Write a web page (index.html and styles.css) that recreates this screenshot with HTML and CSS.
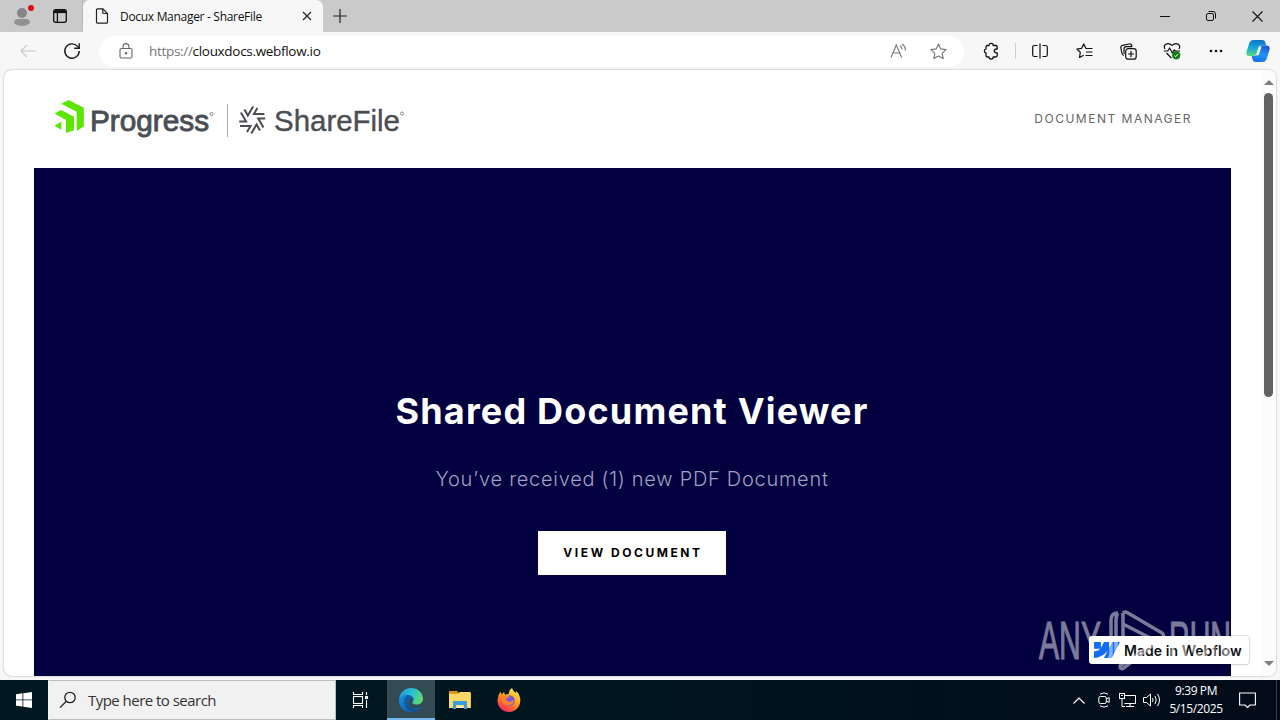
FILE: index.html
```html
<!DOCTYPE html>
<html lang="en">
<head>
  <meta charset="UTF-8" />
  <meta name="viewport" content="width=device-width, initial-scale=1.0" />
  <title>Docux Manager - ShareFile</title>
  <link rel="stylesheet" href="styles.css">
</head>
<body>
  <div class="tab-strip">
    <span class="profile">
      <svg width="20" height="20" viewBox="0 0 20 20"><circle cx="10" cy="6" r="5" fill="#858585"/><path d="M2 16q0-4 4-4h8q4 0 4 4-3 3-8 3t-8-3z" fill="#929292"/></svg>
      <i class="alert-dot"></i>
    </span>
    <span class="workspaces">
      <svg width="16" height="16" viewBox="0 0 16 16" fill="none" stroke="#111" stroke-width="1.3"><rect x="1.7" y="1.7" width="12.6" height="12.6" rx="2"/><path d="M2 3.6h12" stroke-width="3"/><path d="M5.4 4v10"/></svg>
    </span>
    <div class="tab">
      <svg width="14" height="16" viewBox="0 0 14 16" fill="none" stroke="#222" stroke-width="1.2"><path d="M2.5.8h5.3l4.7 4.7v8.7q0 1-1 1h-9q-1 0-1-1V1.8q0-1 1-1z"/><path d="M7.8.8v3.7q0 1 1 1h3.7"/></svg>
      <span class="tab-title">Docux Manager - ShareFile</span>
      <svg class="tab-close" width="10" height="10" viewBox="0 0 10 10" stroke="#222" stroke-width="1.2"><path d="M1 1l8 8M9 1L1 9"/></svg>
    </div>
    <span class="new-tab"><svg width="14" height="14" viewBox="0 0 14 14" stroke="#222" stroke-width="1.2"><path d="M7 0v14M0 7h14"/></svg></span>
    <div class="window-buttons">
      <span><svg width="10" height="10" viewBox="0 0 10 10" stroke="#111"><path d="M0 5.5h10"/></svg></span>
      <span><svg width="10" height="10" viewBox="0 0 10 10" fill="none" stroke="#111"><rect x=".5" y="2.5" width="7" height="7" rx="1.5"/><path d="M2.5.5H7Q9.5.5 9.5 3v4.500"/></svg></span>
      <span><svg width="11" height="11" viewBox="0 0 11 11" stroke="#111" stroke-width="1.1"><path d="M.5.5l10 10M10.5.5l-10 10"/></svg></span>
    </div>
  </div>

  <div class="toolbar">
    <span class="tool back"><svg width="16" height="14" viewBox="0 0 16 14" fill="none" stroke="#c8c8c8" stroke-width="1.2"><path d="M15.5 7H1M7 .8L.9 7 7 13.2"/></svg></span>
    <span class="tool"><svg width="18" height="18" viewBox="0 0 18 18" fill="none" stroke="#1b1b1b" stroke-width="1.4"><path d="M16.200 9A7.200 7.200 0 1 1 14.500 4.400l1.700 1.700"/><path d="M16.200 1.200v5h-5"/></svg></span>
    <div class="address">
      <svg class="lock" width="14" height="16" viewBox="0 0 14 16" fill="none" stroke="#666" stroke-width="1.1"><rect x="1" y="5.5" width="12" height="9.5" rx="1.5"/><path d="M4 5.500V3.600a3 3 0 0 1 6 0v1.900"/><circle cx="7" cy="10.2" r=".7" fill="#666"/></svg>
      <span class="url"><span class="scheme">https://</span>clouxdocs.webflow.io</span>
      <svg class="read-aloud" width="17" height="16" viewBox="0 0 17 16" fill="none" stroke="#777" stroke-width="1.1"><path d="M1 14.500L6.300 2l5.300 12.500M3 10h6.600M10 2.800q2 1.300 2 3.700M12 1q3.600 2.200 3.400 6.500"/></svg>
      <svg class="star" width="17" height="17" viewBox="0 0 17 17" fill="none" stroke="#777" stroke-width="1.1" stroke-linejoin="round"><path d="M8.500 1l2.300 4.900 5.300.7-3.900 3.700 1 5.300-4.700-2.600-4.700 2.600 1-5.300L.9 6.600l5.300-.7z"/></svg>
    </div>
    <div class="tools">
      <span class="tool"><svg width="16" height="18" viewBox="0 0 16 18" fill="none" stroke="#111" stroke-width="1.3" stroke-linejoin="round"><path d="M4.500 3.500H6a2.100 2.100 0 0 1 4.200 0h2.500q1.500 0 1.500 1.500v2h-.9a1.900 1.900 0 0 0 0 3.900h.9v2.600q0 1.500-1.500 1.500h-2.500a2.100 2.100 0 0 1-4.200 0H4.500Q3 15 3 13.500V11a2.100 2.100 0 0 1 0-4.100V5q0-1.500 1.500-1.500z"/></svg></span>
      <i class="divider"></i>
      <span class="tool"><svg width="16" height="16" viewBox="0 0 16 16" fill="none" stroke="#111" stroke-width="1.2"><path d="M8 .5v15M5.500 2.500h-3q-1.800 0-1.800 1.800v7.400q0 1.800 1.800 1.800h3M10.500 2.500h3q1.800 0 1.800 1.800v7.400q0 1.800-1.800 1.800h-3"/></svg></span>
      <span class="tool"><svg width="17" height="16" viewBox="0 0 17 16" fill="none" stroke="#111" stroke-width="1.2" stroke-linejoin="round"><path d="M10.800 5.500l-1-.2L7.700 1 5.600 5.300l-4.700.7 3.400 3.300-.8 5.200 4.200-2.300M10.800 5.500H16.500M10 9h6.500M9.500 12.500h7"/></svg></span>
      <span class="tool"><svg width="17" height="17" viewBox="0 0 17 17" fill="none" stroke="#111" stroke-width="1.2"><rect x="5.7" y="5.7" width="10.500" height="10.500" rx="2.500"/><path d="M11 8v6M8 11h6M4 12.500Q2.300 12 2 10.500L.8 4.700Q.6 2.800 2.400 2.300L9.300 1q1.900-.3 2.500 1.500l.3.900M4 11V6.200q0-2.400 2.300-2.500h6"/></svg></span>
      <span class="tool"><svg width="18" height="18" viewBox="0 0 18 18" fill="none" stroke="#111" stroke-width="1.2" stroke-linejoin="round"><path d="M2 7Q.3 4 2.700 2.200 5.700.4 9 3.400q3.300-3 6.300-1.200Q17.700 4 16 7M.8 9h4l1.800-3 2.700 5 2-3.200 1 1.200H17M3.400 11l5 5"/><circle cx="13.2" cy="13.300" r="4.100" fill="#107c10" stroke="none"/><path d="M11.400 13.400l1.300 1.300 2.500-2.700" stroke="#fff" stroke-width="1"/></svg></span>
      <span class="tool"><svg width="14" height="4" viewBox="0 0 14 4" fill="#111"><circle cx="2" cy="2" r="1.300"/><circle cx="7" cy="2" r="1.300"/><circle cx="12" cy="2" r="1.300"/></svg></span>
      <span class="copilot"><svg width="24" height="22" viewBox="0 0 24 22">
        <defs>
          <linearGradient id="cpA" x1="0.4" y1="0" x2="0.3" y2="1"><stop offset="0" stop-color="#0b74c9"/><stop offset=".5" stop-color="#18a8d8"/><stop offset="1" stop-color="#55d984"/></linearGradient>
          <linearGradient id="cpB" x1="0.7" y1="0" x2="0.3" y2="1"><stop offset="0" stop-color="#1b58d8"/><stop offset=".5" stop-color="#2493f3"/><stop offset="1" stop-color="#1270f0"/></linearGradient>
        </defs>
        <path d="M7.500 0h9q2 0 2.700 2l1 3.500h-5.300q-2 0-2.600 2l-2 6.500q-.6 2-2.600 2H3.500Q-.3 16 .5 11.800L3.400 3Q4.500 0 7.500 0z" fill="url(#cpA)"/>
        <path d="M16.500 22h-7q-2 0-2.700-2l-1.100-4h3q2 0 2.600-2l2-6.500q.6-2 2.600-2h4.600q3.800 0 3 4.200L20.600 19q-1.100 3-4.100 3z" fill="url(#cpB)"/>
        <path d="M13.500 6.500h2l-2.800 8.700h-2.200z" fill="#f7f7f7"/>
      </svg></span>
    </div>
  </div>

  <div class="viewport">
    <main class="page">
      <header class="site-header">
        <svg class="logo" width="354" height="44" viewBox="0 0 354 44">
          <g fill="#5ce500">
            <path d="M7.200 6.700L14.500 3l15.300 7.800v18.800L22.700 34V14.700z"/>
            <path d="M.5 16.500L7 12.900l13 6.800v13.600l-8 2.800V23z"/>
            <path d="M.5 28.500l6.800-3.800v8z"/>
          </g>
          <text class="logo-text progress-text" x="36" y="34" textLength="119" lengthAdjust="spacingAndGlyphs">Progress</text>
          <circle cx="157.5" cy="17" r="1.500" fill="none" stroke="#888"/>
          <path d="M173.500 7v33" stroke="#aaa"/>
          <g transform="translate(198.2 23)" fill="none" stroke="#4b4f54" stroke-width="2">
            <path d="M5.200-12L1.700-6h10.500"/>
            <path d="M5.200-12L1.700-6h10.500" transform="rotate(60)"/>
            <path d="M5.200-12L1.700-6h10.500" transform="rotate(120)"/>
            <path d="M5.200-12L1.700-6h10.500" transform="rotate(180)"/>
            <path d="M5.200-12L1.700-6h10.500" transform="rotate(240)"/>
            <path d="M5.200-12L1.700-6h10.500" transform="rotate(300)"/>
          </g>
          <text class="logo-text share-text" x="220" y="34" textLength="126" lengthAdjust="spacingAndGlyphs">ShareFile</text>
          <circle cx="348" cy="16.5" r="1.500" fill="none" stroke="#888"/>
        </svg>
        <a class="nav-link">DOCUMENT MANAGER</a>
      </header>
      <section class="hero">
        <h1>Shared Document Viewer</h1>
        <p>You’ve received (1) new PDF Document</p>
        <a class="button">VIEW DOCUMENT</a>
      </section>
    </main>
    <div class="scrollbar">
      <i class="arrow up"></i>
      <i class="thumb"></i>
      <i class="arrow down"></i>
    </div>
  </div>

  <div class="webflow-badge">
    <svg width="26" height="16" viewBox="0 0 26 16"><path d="M26 0l-8.300 16H9.900l3.500-6.700h-.2C10.300 13 6.100 15.500 0 16V9.400s3.900-.2 6.200-2.600H0V0h6.900v5.600h.2L10 0h5.200v5.600h.2L18.300 0z" fill="#146ef5"/></svg>
    <span>Made in Webflow</span>
  </div>

  <svg class="watermark" width="204" height="66" viewBox="0 0 204 66">
    <text x="2" y="51" textLength="62" lengthAdjust="spacingAndGlyphs">ANY</text>
    <text x="132" y="51" textLength="62" lengthAdjust="spacingAndGlyphs">RUN</text>
    <path d="M81 5q-7 0-7 7v33q0 5-3 7M81 5q-2 2-2 7v37q0 4-3 4M86 5v11l35 18M86 5q2-2 5 0l34 20q3 2 0 5L87 60q-4 2-4-2l6-4 30-20M86 16v34" fill="none" stroke="#fff" stroke-width="3.500" stroke-linejoin="round"/>
  </svg>

  <footer class="taskbar">
    <span class="start"><svg width="16" height="16" viewBox="0 0 16 16" fill="#fff"><path d="M0 2.200l6.500-.9v6.200H0zM7.300 1.200L16 0v7.500H7.300zM0 8.300h6.500v6.200L0 13.700zM7.300 8.300H16V16l-8.700-1.300z"/></svg></span>
    <div class="search">
      <svg width="18" height="18" viewBox="0 0 18 18" fill="none" stroke="#222" stroke-width="1.3"><circle cx="11" cy="6.500" r="5.200"/><path d="M7.300 10.300L1 16.600"/></svg>
      <span>Type here to search</span>
    </div>
    <span class="task task-view"><svg width="18" height="18" viewBox="0 0 18 18" fill="none" stroke="#fff" stroke-width="1.1"><path d="M1.500 1v2.500h9V1M1.500 17v-2.500h9V17M14.500 1v3M14.500 9v8"/><rect x="1.500" y="5.500" width="9" height="7"/><rect x="13.500" y="5.500" width="2" height="2" fill="#fff"/></svg></span>
    <span class="task active"><svg width="24" height="24" viewBox="0 0 24 24">
      <defs>
        <linearGradient id="edTop" x1="0" y1=".3" x2="1" y2=".6"><stop offset="0" stop-color="#249de0"/><stop offset=".55" stop-color="#2bc3cf"/><stop offset="1" stop-color="#65da63"/></linearGradient>
        <linearGradient id="edLow" x1="0" y1="0" x2=".7" y2="1"><stop offset="0" stop-color="#1793d9"/><stop offset="1" stop-color="#0d5cae"/></linearGradient>
      </defs>
      <path d="M0 11.500C1 4 6 0 12 0c7 0 12 5 12 10.500 0 4-3 6-6.500 6-3 0-5-1.200-3.700-3 1.400-2.200.2-5.500-4-5.500C5 7.500 1 9.500 0 11.500z" fill="url(#edTop)"/>
      <path d="M0 12C.5 8.500 4.500 6.500 8.500 6.700c4.500.2 6.500 3 6 5.300-.7-1.500-3.500-1.500-4.700.8-1.800 3.700 1.700 8 7 7.700 2.400 0 4-.8 5.400-1.500.5-.2.8.1.5.6C20.300 22.500 16.500 24 12 24 4.500 24-.5 18.500 0 12z" fill="url(#edLow)"/>
      <path d="M8.500 7q-5 4-3 9.500Q7.500 22 13 24q5 .2 8.500-3-6.500 1.500-10.200-2.200Q8 15 9.800 12.500q1.500-2 4.500-.7Q14 7.500 8.500 7z" fill="#114a8b" opacity=".65"/>
    </svg></span>
    <span class="task explorer"><svg width="22" height="20" viewBox="0 0 22 20"><path d="M0 1h8l2 2h12v15H0z" fill="#e8a824"/><path d="M0 4h9l2-2h10.500v16H0z" fill="#ffd968"/><path d="M1 1.500h7l1.500 1.500H1z" fill="#d38b0c"/><path d="M4 19v-7q0-1 1-1h12q1 0 1 1v7h-3v-4H7v4z" fill="#399be0"/><path d="M8 16h6v2H8z" fill="#fff1b5"/></svg></span>
    <span class="task firefox"><svg width="24" height="24" viewBox="0 0 24 24">
      <defs><linearGradient id="ff" x1=".8" y1="0" x2=".25" y2="1"><stop offset="0" stop-color="#fff044"/><stop offset=".4" stop-color="#ffad22"/><stop offset=".7" stop-color="#ff6130"/><stop offset="1" stop-color="#f2206d"/></linearGradient></defs>
      <path d="M3.500 3.500l1 3L7 4l1 2.700 4-1Q11.500 2 15 0q1 3.500 4 5l.3-2q4.200 4.200 4 10C23 19.500 18 24 12 24S.7 19.500.5 13Q.2 7.500 3.500 3.500z" fill="url(#ff)"/>
      <circle cx="12.500" cy="12.500" r="5.300" fill="#7659e5"/>
      <path d="M5 8.500q4-2 7.500-.2-1 2.200-3.600 2.300.2 3 3.600 3.200 2.500 0 4-2 .5 4.500-4 5.200-6 .5-8-4.500Q4 11.500 5 8.500z" fill="#ff8127"/>
    </svg></span>
    <div class="tray">
      <svg class="chevron" width="12" height="7" viewBox="0 0 12 7" fill="none" stroke="#fff" stroke-width="1.2"><path d="M.5 6.500L6 1l5.500 5.500"/></svg>
      <svg class="meet" width="12" height="16" viewBox="0 0 12 16" fill="none" stroke="#fff"><rect x=".8" y="4.5" width="7.500" height="7" rx="1.500"/><path d="M8.500 7l2.700-1.500v5L8.500 9M2 2.200Q6-.5 10 2.200M2 13.800q4 2.700 8 0"/></svg>
      <svg class="network" width="17" height="14" viewBox="0 0 17 14" fill="none" stroke="#fff"><path d="M5.500 2.500h11v8H5.500M11 10.500v3M7 13.500h8M3 5.500v8h3"/><rect x=".5" y=".5" width="5" height="5"/><path d="M2 2.500h2"/></svg>
      <svg class="volume" width="18" height="14" viewBox="0 0 18 14" fill="none" stroke="#fff"><path d="M.5 4.500h3L7.500 1v12l-4-3.500h-3zM9.500 5q1.200 2 0 4M12 3q2.500 4 0 8M14.500 1q4 6 0 12"/></svg>
      <div class="clock"><span class="time">9:39 PM</span><span class="date">5/15/2025</span></div>
      <svg class="action-center" width="17" height="17" viewBox="0 0 17 17" fill="none" stroke="#fff" stroke-width="1.1"><path d="M.6 1h15.800v12H11l-2.500 2.500L6 13H.6z"/></svg>
      <i class="show-desktop"></i>
    </div>
  </footer>
</body>
</html>
```
FILE: styles.css
```css
* {
  margin: 0; padding: 0; box-sizing: border-box;
}
body {
  width: 1280px;
  height: 720px;
  overflow: hidden;
  display: flex;
  flex-direction: column;
  position: relative;
  background: #f7f7f7;
  font-family: "Open Sans", "Noto Sans", sans-serif;
  color: #111;
}
svg {
  display: block;
  flex: none;
}

/* browser frame */
.tab-strip {
  height: 32px;
  flex: none;
  display: flex;
  background: #cacaca;
}
.profile, .workspaces {
  display: flex;
  align-items: center;
  justify-content: center;
  position: relative;
}
.profile {
  width: 44px;
  padding-top: 2px;
}
.workspaces {
  width: 39px;
  padding-right: 7px;
  border-right: 1px solid #b8b8b8;
  border-bottom-right-radius: 4px;
}
.alert-dot {
  position: absolute;
  left: 28px;
  top: 5px;
  width: 6px;
  height: 6px;
  border-radius: 50%;
  background: #df0b18;
}
.tab {
  width: 240px;
  display: flex;
  align-items: center;
  padding: 0 11px 0 12px;
  background: #f7f7f7;
  border-radius: 7px 7px 0 0;
}
.tab-title {
  font-size: 12px;
  margin-left: 11px;
  letter-spacing: -0.3px;
  white-space: nowrap;
}
.tab-close {
  margin-left: auto;
}
.new-tab {
  width: 34px;
  display: flex;
  align-items: center;
  justify-content: center;
}
.window-buttons {
  margin-left: auto;
  display: flex;
}
.window-buttons span {
  width: 46px;
  display: flex;
  align-items: center;
  justify-content: center;
}

.toolbar {
  height: 38px;
  flex: none;
  display: flex;
  align-items: center;
  padding-left: 6px;
}
.tool {
  width: 44px;
  display: flex;
  align-items: center;
  justify-content: center;
}
.address {
  width: 865px;
  height: 31px;
  margin-left: 5px;
  padding: 0 17px 0 20px;
  display: flex;
  align-items: center;
  background: #fff;
  border-radius: 16px;
}
.url {
  margin-left: 16px;
  padding-bottom: 1px;
  font-size: 13.5px;
  letter-spacing: -0.31px;
}
.scheme {
  color: #777;
}
.read-aloud {
  margin-left: auto;
}
.star {
  margin-left: 23px;
}
.tools {
  display: flex;
  align-items: center;
  margin-left: 5px;
}
.divider {
  width: 1px;
  height: 16px;
  margin: 0 2px;
  background: #cfcfcf;
}
.copilot {
  margin-left: 8px;
}

/* page */
.viewport {
  width: 1272px;
  height: 606px;
  flex: none;
  margin-left: 4px;
  display: flex;
  overflow: hidden;
  background: #fff;
  border-radius: 8px;
  box-shadow: 0 0 2px rgba(0, 0, 0, 0.35);
}
.page {
  width: 1257px;
  padding: 0 30px;
  font-family: Inter, "Open Sans", sans-serif;
}
.site-header {
  height: 98px;
  display: flex;
  align-items: center;
  justify-content: space-between;
  padding: 0 39px 0 20px;
}
.logo-text {
  font-family: "Liberation Sans", sans-serif;
  font-size: 30px;
  fill: #4b4f54;
  stroke: #4b4f54;
}
.progress-text {
  stroke-width: 0.9;
}
.share-text {
  stroke-width: 0.4;
}
.nav-link {
  padding-bottom: 1px;
  font-size: 12px;
  letter-spacing: 1.5px;
  color: #666;
}
.hero {
  height: 508px;
  padding: 216px 1px 0 0;
  display: flex;
  flex-direction: column;
  align-items: center;
  background: #02003f;
  color: #fff;
}
.hero h1 {
  font-size: 36px;
  line-height: 54px;
  font-weight: 700;
  letter-spacing: 1.17px;
  white-space: nowrap;
}
.hero p {
  margin-top: 26px;
  font-size: 20px;
  line-height: 30px;
  font-weight: 300;
  letter-spacing: 0.72px;
  color: #a19fc3;
}
.button {
  width: 188px;
  height: 44px;
  margin-top: 37px;
  padding: 0 0 1px 2px;
  display: flex;
  align-items: center;
  justify-content: center;
  background: #fff;
  color: #000;
  font-size: 12px;
  font-weight: 700;
  letter-spacing: 2.55px;
}
.scrollbar {
  width: 15px;
  display: flex;
  flex-direction: column;
  align-items: center;
  padding: 10px 0 10px;
  background: #fcfcfc;
}
.arrow {
  border: 5px solid transparent;
}
.up {
  border-top: 0;
  border-bottom-color: #7e7e7e;
}
.down {
  margin-top: auto;
  border-bottom: 0;
  border-top-color: #7e7e7e;
}
.thumb {
  width: 9px;
  height: 304px;
  margin-top: 8px;
  border-radius: 5px;
  background: #636363;
}

.webflow-badge {
  position: absolute;
  left: 1089px;
  top: 636px;
  width: 160px;
  height: 28px;
  display: flex;
  align-items: center;
  padding-left: 5px;
  background: #fff;
  border-radius: 3px;
  box-shadow: 0 0 0 1px rgba(0, 0, 0, 0.1), 0 1px 3px rgba(0, 0, 0, 0.1);
  font-family: Inter, sans-serif;
  font-size: 14px;
  font-weight: 600;
  letter-spacing: 0.05px;
}
.webflow-badge span {
  margin-left: 4px;
  white-space: nowrap;
}
.watermark {
  position: absolute;
  left: 1037px;
  top: 608px;
  opacity: 0.48;
}
.watermark text {
  font-family: "Liberation Sans", sans-serif;
  font-size: 53px;
  fill: #fff;
  stroke: #fff;
  stroke-width: 1;
}

/* taskbar */
.taskbar {
  height: 40px;
  margin-top: 4px;
  flex: none;
  display: flex;
  background: linear-gradient(90deg, #001820, #00161f 50%, #030b19);
}
.start, .task {
  width: 48px;
  display: flex;
  align-items: center;
  justify-content: center;
}
.search {
  width: 288px;
  display: flex;
  align-items: center;
  padding-left: 10px;
  background: #f1f1f1;
  border: 1px solid #bdbdbd;
  border-left-color: #f1f1f1;
  color: #333;
  font-size: 15px;
}
.search span {
  margin-left: 11px;
  letter-spacing: -0.53px;
}
.task-view {
  width: 51px;
  padding-right: 2px;
}
.explorer {
  padding-left: 2px;
}
.firefox {
  padding-left: 4px;
}
.active {
  background: #344b53;
  box-shadow: inset 0 -2px #76b9ed;
}
.tray {
  margin-left: auto;
  display: flex;
  align-items: center;
  color: #fff;
}
.meet {
  margin-left: 13px;
}
.network {
  margin-left: 9px;
}
.volume {
  margin-left: 7px;
}
.clock {
  width: 70px;
  display: flex;
  flex-direction: column;
  align-items: center;
  font-size: 12px;
  line-height: 18px;
  letter-spacing: -0.4px;
}
.action-center {
  margin-left: 8px;
}
.show-desktop {
  width: 1px;
  height: 40px;
  margin: 0 3px 0 20px;
  background: #344049;
}
```
